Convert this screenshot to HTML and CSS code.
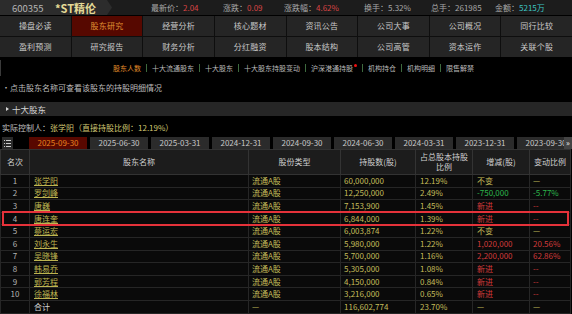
FILE: index.html
```html
<!DOCTYPE html>
<html lang="zh-CN">
<head>
    <meta charset="UTF-8">
    <title>*ST精伦 股东研究</title>
    <link rel="stylesheet" href="styles.css">
</head>
<body>
    <div class="page">
        <div class="quote">
            <div class="stock">
                <span class="code">600355</span>
                <span class="name">*ST精伦</span>
            </div>
            <div class="q q1">最新价：<span class="red">2.04</span></div>
            <div class="q q2">涨跌：<span class="red">0.09</span></div>
            <div class="q q3">涨跌幅：<span class="red">4.62%</span></div>
            <div class="q q4">换手：<span>5.32%</span></div>
            <div class="q q5">总手：<span>261985</span></div>
            <div class="q">金额：<span class="cyan">5215万</span></div>
        </div>

        <nav class="menu">
            <a>操盘必读</a>
            <a class="active">股东研究</a>
            <a>经营分析</a>
            <a>核心题材</a>
            <a>资讯公告</a>
            <a>公司大事</a>
            <a>公司概况</a>
            <a>同行比较</a>
            <a>盈利预测</a>
            <a>研究报告</a>
            <a>财务分析</a>
            <a>分红融资</a>
            <a>股本结构</a>
            <a>公司高管</a>
            <a>资本运作</a>
            <a>关联个股</a>
        </nav>

        <div class="subnav">
            <a class="current">股东人数</a>
            <a>十大流通股东</a>
            <a>十大股东</a>
            <a>十大股东持股变动</a>
            <a class="dot">沪深港通持股</a>
            <a>机构持仓</a>
            <a>机构明细</a>
            <a>限售解禁</a>
        </div>

        <p class="tip">•点击股东名称可查看该股东的持股明细情况</p>

        <div class="section"><span class="arrow"></span>十大股东</div>

        <p class="ctrl">实际控制人：<span>张学阳（直接持股比例：12.19%）</span></p>

        <div class="tabs">
            <span class="list-icon">
                <svg width="7" height="7" viewBox="0 0 7 7">
                    <rect x="0" y="0" width="1" height="1" fill="#ccc"/>
                    <rect x="2" y="0" width="5" height="1" fill="#ccc"/>
                    <rect x="0" y="3" width="1" height="1" fill="#ccc"/>
                    <rect x="2" y="3" width="5" height="1" fill="#ccc"/>
                    <rect x="0" y="6" width="1" height="1" fill="#ccc"/>
                    <rect x="2" y="6" width="5" height="1" fill="#ccc"/>
                </svg>
            </span>
            <a class="tab active">2025-09-30</a>
            <a class="tab">2025-06-30</a>
            <a class="tab">2025-03-31</a>
            <a class="tab">2024-12-31</a>
            <a class="tab">2024-09-30</a>
            <a class="tab">2024-06-30</a>
            <a class="tab">2024-03-31</a>
            <a class="tab">2023-12-31</a>
            <a class="tab">2023-09-30</a>
            <span class="more">»</span>
        </div>

        <div class="holders">
            <table>
                <colgroup>
                    <col style="width:29px">
                    <col style="width:219px">
                    <col style="width:92px">
                    <col style="width:75px">
                    <col style="width:57px">
                    <col style="width:57px">
                    <col style="width:41px">
                </colgroup>
                <thead>
                    <tr>
                        <th>名次</th>
                        <th>股东名称</th>
                        <th>股份类型</th>
                        <th>持股数(股)</th>
                        <th>占总股本持股<br>比例</th>
                        <th>增减(股)</th>
                        <th>变动比例</th>
                    </tr>
                </thead>
                <tbody>
                    <tr><td>1</td><td><a>张学阳</a></td><td>流通A股</td><td>60,000,000</td><td>12.19%</td><td>不变</td><td>—</td></tr>
                    <tr><td>2</td><td><a>罗剑峰</a></td><td>流通A股</td><td>12,250,000</td><td>2.49%</td><td class="down">-750,000</td><td class="down">-5.77%</td></tr>
                    <tr><td>3</td><td><a>唐巍</a></td><td>流通A股</td><td>7,153,900</td><td>1.45%</td><td class="up">新进</td><td class="up">--</td></tr>
                    <tr><td>4</td><td><a>唐连奎</a></td><td>流通A股</td><td>6,844,000</td><td>1.39%</td><td class="up">新进</td><td class="up">--</td></tr>
                    <tr><td>5</td><td><a>蔡运宏</a></td><td>流通A股</td><td>6,003,874</td><td>1.22%</td><td>不变</td><td>—</td></tr>
                    <tr><td>6</td><td><a>刘永生</a></td><td>流通A股</td><td>5,980,000</td><td>1.22%</td><td class="up">1,020,000</td><td class="up">20.56%</td></tr>
                    <tr><td>7</td><td><a>吴晓锋</a></td><td>流通A股</td><td>5,700,000</td><td>1.16%</td><td class="up">2,200,000</td><td class="up">62.86%</td></tr>
                    <tr><td>8</td><td><a>韩易乔</a></td><td>流通A股</td><td>5,305,000</td><td>1.08%</td><td class="up">新进</td><td class="up">--</td></tr>
                    <tr><td>9</td><td><a>郭芳程</a></td><td>流通A股</td><td>4,150,000</td><td>0.84%</td><td class="up">新进</td><td class="up">--</td></tr>
                    <tr><td>10</td><td><a>徐福林</a></td><td>流通A股</td><td>3,216,000</td><td>0.65%</td><td class="up">新进</td><td class="up">--</td></tr>
                    <tr class="total"><td></td><td>合计</td><td>—</td><td>116,602,774</td><td>23.70%</td><td>—</td><td>—</td></tr>
                </tbody>
            </table>
            <div class="mark"></div>
        </div>
    </div>
</body>
</html>
```

FILE: styles.css
```css
* {
    box-sizing: border-box;
    margin: 0;
    padding: 0;
}

body {
    background: #000;
    color: #c8c8c8;
    font-family: "Noto Sans CJK SC", "Noto Sans", sans-serif;
    font-size: 8px;
    width: 572px;
    height: 314px;
    overflow: hidden;
}

.page {
    width: 572px;
}

/* 行情条 */
.quote {
    display: flex;
    align-items: center;
    height: 15px;
    background: #1c1c1c;
    margin-bottom: 1px;
    white-space: nowrap;
}

.stock {
    display: flex;
    align-items: center;
    width: 112px;
    height: 15px;
    margin-right: 39px;
    background: #2c2c2c;
    clip-path: polygon(0 0, 107px 0, 112px 50%, 107px 100%, 0 100%);
}

.code {
    color: #b4b4b4;
    font-size: 9.5px;
    margin-left: 12px;
    width: 43px;
}

.name {
    color: #e4da96;
    font-size: 11px;
    font-weight: bold;
}

.q {
    color: #a8a8a8;
}

.q1 { width: 72px; }
.q2 { width: 61px; }
.q3 { width: 80px; }
.q4 { width: 67px; }
.q5 { width: 64px; }

.red { color: #d84444; }
.cyan { color: #3cc4c4; }

/* 主菜单 */
.menu {
    display: grid;
    grid-template-columns: repeat(8, 1fr);
    gap: 1px;
    background: #0e0e0e;
}

.menu a {
    height: 20px;
    line-height: 20px;
    text-align: center;
    background: #252525;
    color: #cacaca;
    letter-spacing: 0.2px;
}

.menu a.active {
    background: #560800;
    color: #e09232;
}

/* 子菜单 */
.subnav {
    display: flex;
    align-items: center;
    height: 16px;
    margin-top: 3px;
    padding-left: 112px;
    border-left: 1px solid #3a3a3a;
    font-size: 7px;
    color: #b8b8b8;
    white-space: nowrap;
}

.subnav a + a {
    border-left: 1px solid #3e6a3e;
    padding-left: 5px;
    margin-left: 5px;
    line-height: 8px;
}

.subnav a.current {
    color: #e08c2a;
}

.subnav a.dot::after {
    content: "";
    display: inline-block;
    width: 3px;
    height: 3px;
    margin-left: 1px;
    border-radius: 50%;
    background: #f01010;
    vertical-align: 4px;
}

.tip {
    margin-top: 6px;
    padding-left: 2px;
    line-height: 12px;
    color: #bcbcbc;
}

.section {
    display: flex;
    align-items: center;
    height: 14px;
    margin-top: 8px;
    background: #262626;
    color: #d4d4d4;
    font-size: 8.5px;
}

.arrow {
    width: 0;
    height: 0;
    margin: 0 3px 0 6px;
    border-left: 3px solid #d8d8d8;
    border-top: 2.5px solid transparent;
    border-bottom: 2.5px solid transparent;
}

.ctrl {
    margin-top: 6px;
    padding-left: 2px;
    line-height: 12px;
    color: #c0c0c0;
}

.ctrl span {
    color: #cfc672;
}

/* 报告期 */
.tabs {
    position: relative;
    display: flex;
    height: 12px;
    margin-top: 3px;
    gap: 3px;
    overflow: hidden;
    white-space: nowrap;
}

.list-icon {
    display: flex;
    align-items: center;
    justify-content: center;
    flex: none;
    width: 11px;
    margin: 0 13px 0 2px;
    background: #2a2a2a;
}

.tab {
    flex: none;
    width: 58px;
    line-height: 12px;
    text-align: center;
    background: #2b2b2b;
    color: #c8c8c8;
}

.tab.active {
    background: #580800;
    color: #e8821e;
}

.more {
    position: absolute;
    right: 0;
    top: 0;
    width: 8px;
    height: 12px;
    line-height: 11px;
    text-align: center;
    background: #444;
    color: #eee;
    font-size: 8px;
}

/* 股东表 */
.holders {
    position: relative;
}

table {
    width: 570px;
    border-collapse: collapse;
    table-layout: fixed;
}

th {
    height: 25px;
    background: #1c1c1c;
    border: 1px solid #333;
    color: #d0d0d0;
    font-weight: normal;
    line-height: 10px;
}

td {
    height: 12.6px;
    padding: 0 0 0 3px;
    line-height: 10px;
    background: #0a0a0a;
    border: 1px solid #262626;
    color: #c4bd5a;
    white-space: nowrap;
}

td:first-child {
    padding: 0;
    text-align: center;
    color: #b4b4b4;
}

td a {
    color: #bdb450;
    text-decoration: underline;
}

td:nth-child(2) {
    padding-left: 4px;
}

td:nth-child(5),
td:nth-child(6) {
    padding-left: 4px;
}

td.up { color: #d23a3a; }
td.down { color: #2cb84c; }

.total td:nth-child(2) {
    color: #d4d4d4;
}

.mark {
    position: absolute;
    left: 2px;
    top: 62px;
    width: 567px;
    height: 15px;
    border: 2px solid #e5323a;
}
```
